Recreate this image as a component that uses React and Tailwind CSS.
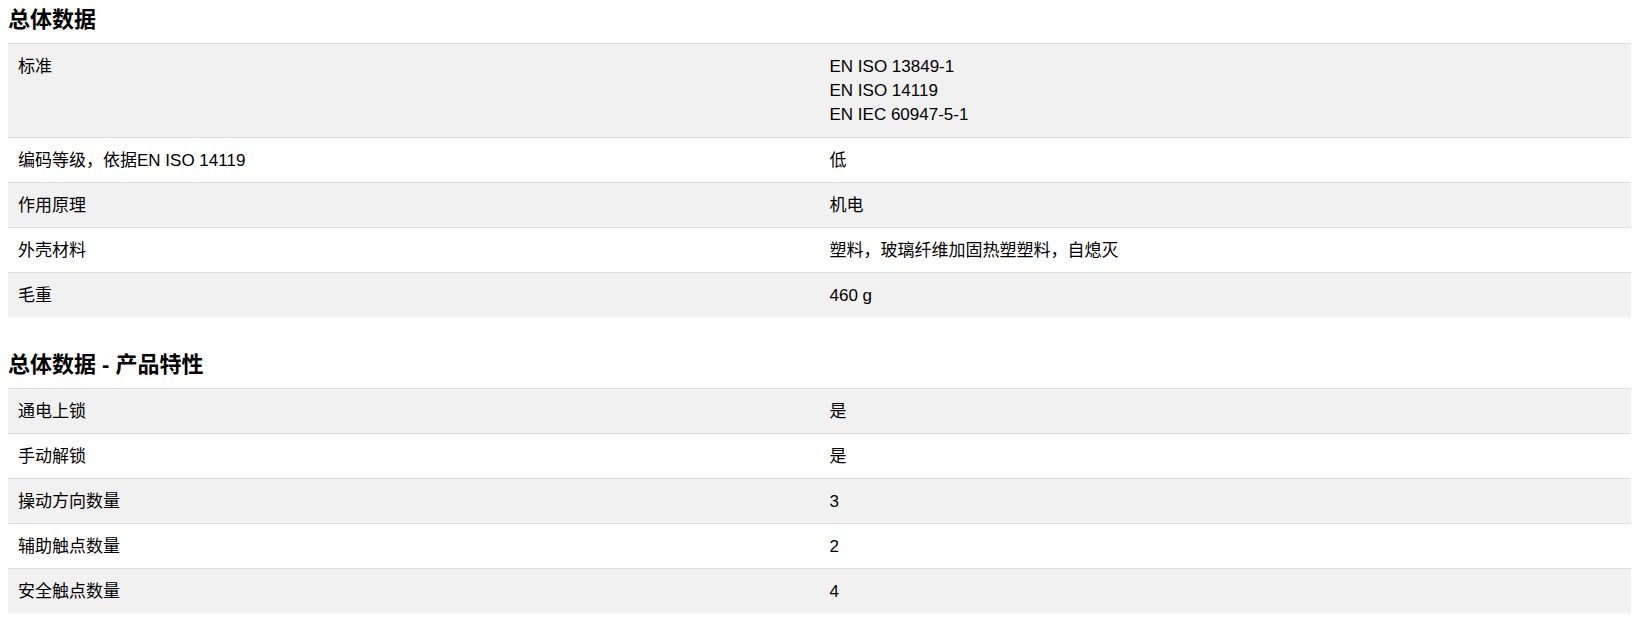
import React from "react";

const sections = [
  {
    title: "总体数据",
    rows: [
      ["标准", ["EN ISO 13849-1", "EN ISO 14119", "EN IEC 60947-5-1"]],
      ["编码等级，依据EN ISO 14119", ["低"]],
      ["作用原理", ["机电"]],
      ["外壳材料", ["塑料，玻璃纤维加固热塑塑料，自熄灭"]],
      ["毛重", ["460 g"]],
    ],
  },
  {
    title: "总体数据 - 产品特性",
    rows: [
      ["通电上锁", ["是"]],
      ["手动解锁", ["是"]],
      ["操动方向数量", ["3"]],
      ["辅助触点数量", ["2"]],
      ["安全触点数量", ["4"]],
    ],
  },
];

export default function App() {
  return (
    <div
      className="w-[1644px] bg-white text-black"
      style={{ fontFamily: '"Liberation Sans", "Noto Sans CJK SC", sans-serif' }}
    >
      <div className="ml-[8px] w-[1623px] flex flex-col gap-[28px]">
        {sections.map((s) => (
          <section key={s.title}>
            <h2 className="pt-[6px] pb-[9px] text-[22px] leading-[28px] font-bold">
              {s.title}
            </h2>
            <div className="flex flex-col">
              {s.rows.map(([k, v], i) => (
                <div
                  key={k}
                  className={
                    "grid grid-cols-2 border-t border-[#dcdcdc] text-[17px] leading-[24px] " +
                    (i % 2 === 0 ? "bg-[#f1f1f1]" : "bg-white")
                  }
                >
                  <div className="px-[10px] pt-[11px]">{k}</div>
                  <div
                    className={
                      "px-[10px] pt-[11px] flex flex-col " +
                      (v.length > 1 ? "pb-[10px]" : "pb-[9px]")
                    }
                  >
                    {v.map((line) => (
                      <span key={line}>{line}</span>
                    ))}
                  </div>
                </div>
              ))}
            </div>
          </section>
        ))}
      </div>
    </div>
  );
}
